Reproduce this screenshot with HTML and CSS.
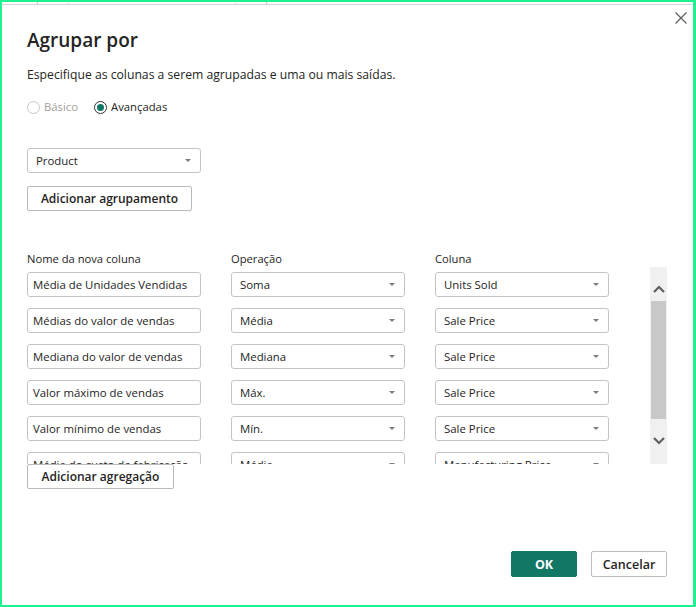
FILE: index.html
```html
<!DOCTYPE html>
<html lang="pt">
<head>
<meta charset="utf-8">
<title>Agrupar por</title>
<link rel="stylesheet" href="styles.css">
</head>
<body>
<div class="frame">
  <div class="topstrip"></div>
  <div class="dialog">
    <button class="close" aria-label="Fechar">
      <svg width="12" height="12" viewBox="0 0 12 12"><path d="M0.5 0.5 L11.5 11.5 M11.5 0.5 L0.5 11.5" stroke="#605e5c" stroke-width="1.2" fill="none"/></svg>
    </button>
    <h1 class="title">Agrupar por</h1>
    <p class="desc">Especifique as colunas a serem agrupadas e uma ou mais saídas.</p>
    <div class="radios">
      <label class="radio disabled"><span class="dot"></span>Básico</label>
      <label class="radio checked"><span class="dot"></span>Avançadas</label>
    </div>
    <div class="select product"><span>Product</span><span class="caret"></span></div>
    <button class="btn add-group">Adicionar agrupamento</button>

    <div class="heads">
      <span>Nome da nova coluna</span>
      <span>Operação</span>
      <span>Coluna</span>
    </div>
    <div class="aggs">
      <div class="agg-list">
        <div class="row">
          <div class="input">Média de Unidades Vendidas</div>
          <div class="select"><span>Soma</span><span class="caret"></span></div>
          <div class="select"><span>Units Sold</span><span class="caret"></span></div>
        </div>
        <div class="row">
          <div class="input">Médias do valor de vendas</div>
          <div class="select"><span>Média</span><span class="caret"></span></div>
          <div class="select"><span>Sale Price</span><span class="caret"></span></div>
        </div>
        <div class="row">
          <div class="input">Mediana do valor de vendas</div>
          <div class="select"><span>Mediana</span><span class="caret"></span></div>
          <div class="select"><span>Sale Price</span><span class="caret"></span></div>
        </div>
        <div class="row">
          <div class="input">Valor máximo de vendas</div>
          <div class="select"><span>Máx.</span><span class="caret"></span></div>
          <div class="select"><span>Sale Price</span><span class="caret"></span></div>
        </div>
        <div class="row">
          <div class="input">Valor mínimo de vendas</div>
          <div class="select"><span>Mín.</span><span class="caret"></span></div>
          <div class="select"><span>Sale Price</span><span class="caret"></span></div>
        </div>
        <div class="row">
          <div class="input">Média do custo de fabricação</div>
          <div class="select"><span>Média</span><span class="caret"></span></div>
          <div class="select"><span>Manufacturing Price</span><span class="caret"></span></div>
        </div>
      </div>
      <div class="scrollbar">
        <span class="arrow up">
          <svg width="12" height="8" viewBox="0 0 12 8"><path d="M1 7 L6 2 L11 7" stroke="#5f5f5f" stroke-width="2.2" fill="none"/></svg>
        </span>
        <span class="thumb"></span>
        <span class="arrow down">
          <svg width="12" height="8" viewBox="0 0 12 8"><path d="M1 1 L6 6 L11 1" stroke="#5f5f5f" stroke-width="2.2" fill="none"/></svg>
        </span>
      </div>
    </div>
    <button class="btn add-agg">Adicionar agregação</button>

    <div class="footer">
      <button class="btn primary">OK</button>
      <button class="btn cancel">Cancelar</button>
    </div>
  </div>
</div>
</body>
</html>
```

FILE: styles.css
```css
* { box-sizing: border-box; }

html, body {
  margin: 0;
  padding: 0;
  background: #ffffff;
}

body {
  font-family: "Open Sans", "Noto Sans", "DejaVu Sans", sans-serif;
  color: #252423;
  font-size: 12px;
}

.frame {
  width: 696px;
  height: 607px;
  border: 2px solid #1ef28f;
  border-right-width: 3px;
  background: #ffffff;
  position: relative;
  display: flex;
  flex-direction: column;
}

.topstrip {
  height: 3px;
  border-bottom: 1px solid #d4d4d4;
  background:
    linear-gradient(#c8c8c8, #c8c8c8) 35px 0 / 1px 2px no-repeat,
    linear-gradient(#c8c8c8, #c8c8c8) 66px 1px / 1px 1px no-repeat,
    linear-gradient(#c8c8c8, #c8c8c8) 233px 1px / 1px 1px no-repeat,
    linear-gradient(#c8c8c8, #c8c8c8) 264px 0 / 1px 2px no-repeat,
    #ffffff;
}

.dialog {
  flex: 1;
  padding: 0 25px;
  display: flex;
  flex-direction: column;
  align-items: flex-start;
}

.close {
  position: absolute;
  top: 8px;
  right: 4px;
  width: 16px;
  height: 16px;
  padding: 2px;
  border: 0;
  background: transparent;
  display: flex;
  align-items: center;
  justify-content: center;
}

.title {
  margin: 21px 0 0;
  font-size: 19px;
  font-weight: 600;
  line-height: 28px;
  color: #252423;
}

.desc {
  margin: 12px 0 0;
  font-size: 12.2px;
  line-height: 18px;
}

.radios {
  margin-top: 14px;
  display: flex;
  gap: 16px;
  height: 18px;
  align-items: center;
}

.radio {
  display: flex;
  align-items: center;
  gap: 4px;
  font-size: 11.3px;
  line-height: 18px;
}

.radio .dot {
  width: 13px;
  height: 13px;
  border-radius: 50%;
  border: 1px solid #323130;
  display: inline-flex;
  align-items: center;
  justify-content: center;
}

.radio.disabled { color: #a19f9d; }
.radio.disabled .dot { border-color: #c8c6c4; }

.radio.checked .dot::after {
  content: "";
  width: 7px;
  height: 7px;
  border-radius: 50%;
  background: #117865;
}

.select, .input {
  width: 174px;
  height: 25px;
  border: 1px solid #c4c4c4;
  border-radius: 3px;
  background: #ffffff;
  font-size: 11.4px;
  display: flex;
  align-items: center;
  color: #252423;
  white-space: nowrap;
  overflow: hidden;
}

.input {
  padding-left: 5px;
}

.select {
  padding: 0 9px 0 8px;
  justify-content: space-between;
}

.caret {
  width: 0;
  height: 0;
  border-left: 3px solid transparent;
  border-right: 3px solid transparent;
  border-top: 3px solid #7a7a7a;
  flex: none;
}

.product {
  margin-top: 32px;
}

.btn {
  font-family: inherit;
  height: 25px;
  border: 1px solid #b8b8b8;
  border-radius: 2px;
  background: #ffffff;
  color: #252423;
  font-size: 12px;
  font-weight: 600;
  padding: 0;
  white-space: nowrap;
  display: flex;
  align-items: center;
  justify-content: center;
  cursor: pointer;
}

.add-group {
  margin-top: 13px;
  width: 165px;
}

.heads {
  margin-top: 40px;
  display: grid;
  grid-template-columns: 174px 174px 174px;
  column-gap: 30px;
  font-size: 11.2px;
  line-height: 16px;
}

.aggs {
  display: flex;
  align-items: flex-start;
  height: 197px;
}

.agg-list {
  width: 582px;
  height: 197px;
  overflow: hidden;
  padding-top: 5px;
  display: flex;
  flex-direction: column;
  gap: 11px;
}

.row {
  display: grid;
  grid-template-columns: 174px 174px 174px;
  column-gap: 30px;
  flex: none;
}

.scrollbar {
  margin-left: 41px;
  width: 17px;
  height: 197px;
  background: #f0f0f0;
  display: flex;
  flex-direction: column;
  align-items: center;
  padding: 0 1px;
}

.scrollbar .arrow {
  display: flex;
  align-items: center;
  justify-content: center;
  flex: none;
}

.scrollbar .arrow.up {
  height: 34px;
  padding-top: 10px;
}

.scrollbar .arrow.down {
  height: 44px;
}

.scrollbar .thumb {
  width: 15px;
  height: 118px;
  background: #c8c8c8;
  flex: none;
}

.add-agg {
  width: 147px;
}

.footer {
  margin-top: auto;
  margin-bottom: 28px;
  align-self: flex-end;
  display: flex;
  gap: 14px;
  margin-right: 1px;
}

.footer .btn {
  height: 26px;
  font-size: 12.5px;
}

.primary {
  width: 66px;
  background: #117865;
  border-color: #117865;
  color: #ffffff;
  font-weight: 700;
}

.cancel {
  width: 76px;
  font-weight: 600;
  border-color: #bdbdbd;
}
```
